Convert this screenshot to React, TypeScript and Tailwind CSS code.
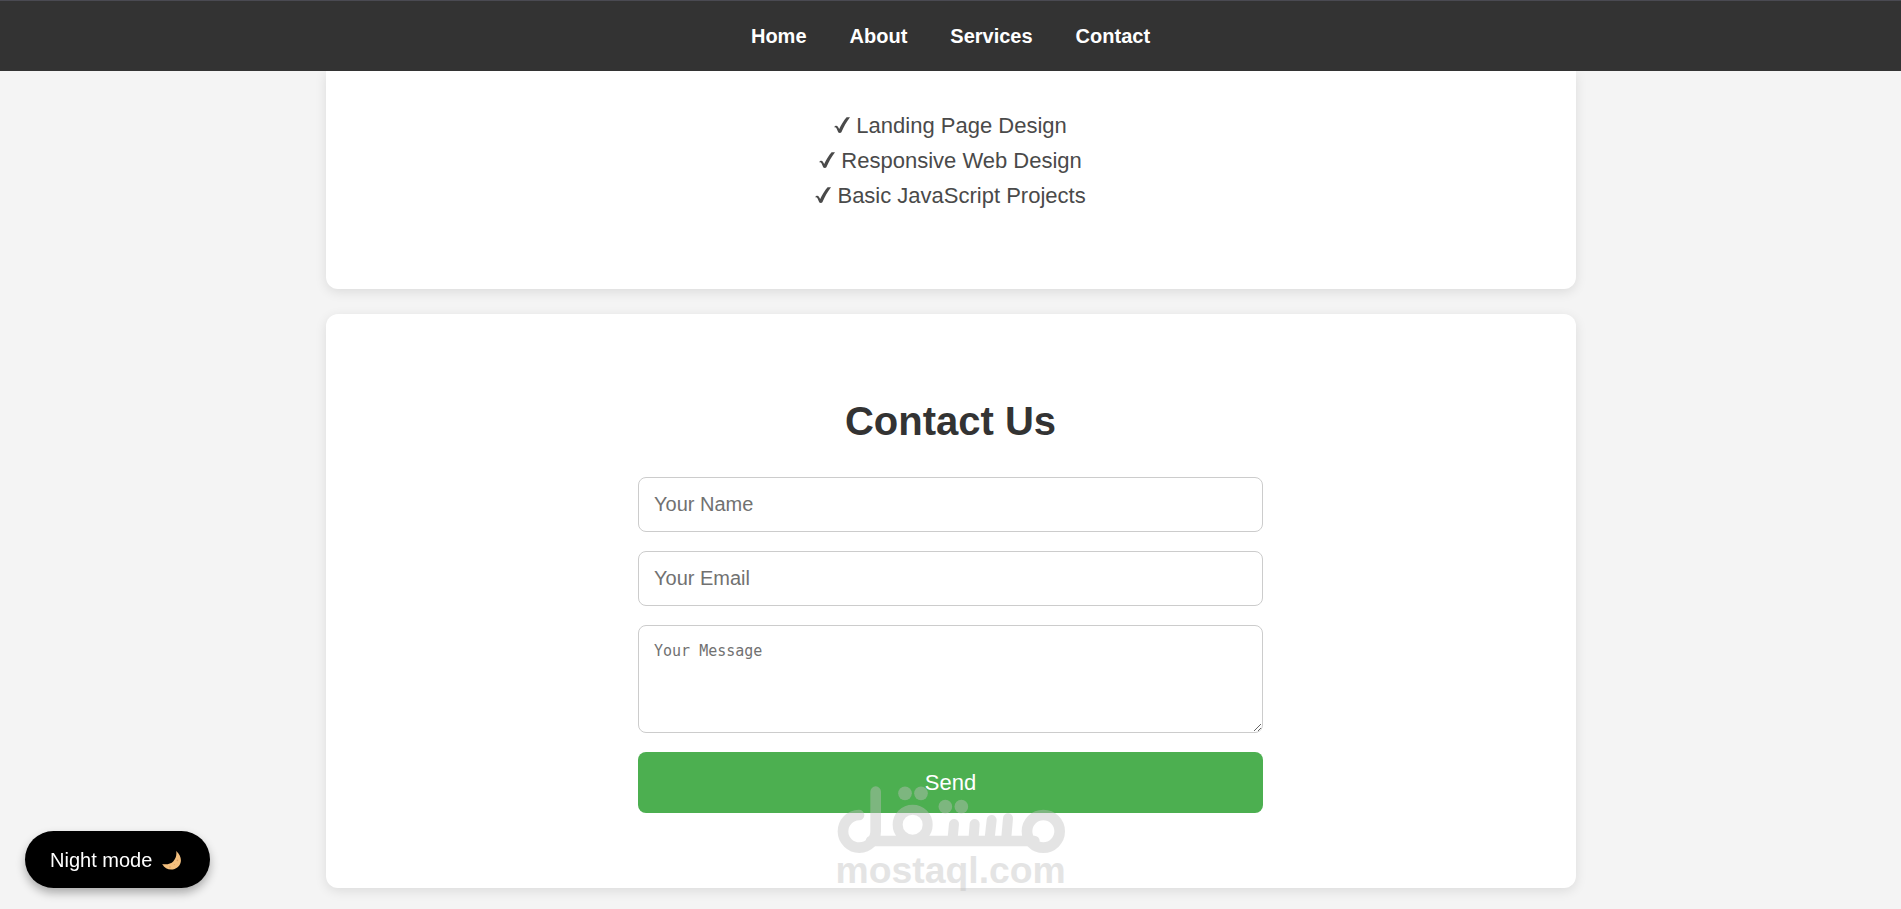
import { useState } from "react";

const navLinks = [
  { href: "#home", label: "Home" },
  { href: "#about", label: "About" },
  { href: "#services", label: "Services" },
  { href: "#contact", label: "Contact" },
];

const services = ["Landing Page Design", "Responsive Web Design", "Basic JavaScript Projects"];

const fieldClass =
  "block w-full rounded-lg border border-[#cccccc] bg-white px-[15px] text-[#333333] placeholder:text-[#717171] placeholder:opacity-100 outline-none";

function CheckMark() {
  return (
    <svg className="inline-block h-4 w-4 fill-current align-baseline" viewBox="0 0 16 16" aria-hidden="true">
      <path d="M0.2 10.2 C1.2 8.4 3 8.4 3.9 9.8 L5.2 12 C7.2 7.6 9.8 3.4 12.6 0.2 L16 0.2 C12.6 4.8 9.8 9.6 7.4 15.2 C6.9 16.2 4.7 16.2 4.2 15.2 L2.6 11.4 C2.1 10.3 1.2 10.1 0.2 10.2 Z" />
    </svg>
  );
}

function Moon() {
  return (
    <svg className="h-5 w-[23px]" viewBox="0 -1 23 20" aria-hidden="true">
      <path
        d="M14.2 0 C21.2 6 20.2 15.4 12.6 18 C7.8 19.6 2.8 17.8 0.2 13 C4.6 13.8 8.8 13 11.4 10.2 C14 7.4 14.8 3.8 14.2 0 Z"
        fill="#f3bf7d"
      />
      <circle cx="15.4" cy="9.4" r="0.8" fill="#d99b62" />
      <circle cx="8" cy="16" r="0.8" fill="#d99b62" />
      <circle cx="12.4" cy="13.6" r="0.7" fill="#e0a76c" />
    </svg>
  );
}

function Watermark() {
  return (
    <svg
      className="pointer-events-none absolute -bottom-[6px] left-1/2 h-[110px] w-[232px] -translate-x-1/2"
      viewBox="42 132 696 330"
      aria-hidden="true"
    >
      <g opacity="0.42">
        <g fill="none" stroke="#c1c1c1" strokeWidth="32" strokeLinecap="round">
          {/* lam */}
          <path d="M114 225 A49 49 0 1 0 164 274 V155" />
          {/* baseline */}
          <path d="M150 303 H640" />
          {/* qaf and meem */}
          <circle cx="275" cy="254" r="45" strokeWidth="30" />
          <circle cx="667" cy="274" r="49" />
          {/* teeth */}
          <path d="M399 252 L394 303 M461 252 L457 303 M512 240 L505 303 M561 235 L555 303" strokeWidth="30" />
        </g>
        <g fill="#c1c1c1">
          <circle cx="252" cy="160" r="20.5" />
          <circle cx="300" cy="160" r="20.5" />
          <circle cx="373" cy="200" r="20.5" />
          <circle cx="421" cy="200" r="20.5" />
          <text x="389" y="430" textAnchor="middle" fontSize="112" fontWeight="700">
            mostaql.com
          </text>
        </g>
      </g>
    </svg>
  );
}

export default function App() {
  const [night, setNight] = useState(false);

  return (
    <div className="min-h-screen bg-[#f4f4f4] pb-[21px] font-['Liberation_Sans',Arial,sans-serif]">
      <nav className="sticky top-0 z-10 flex h-[71px] items-center justify-center gap-[43px] border-t border-[#4a4a52] bg-[#333333]">
        {navLinks.map((link) => (
          <a key={link.href} href={link.href} className="text-xl font-bold text-white">
            {link.label}
          </a>
        ))}
      </nav>

      <main className="mx-auto flex max-w-[1250px] flex-col gap-[25px]">
        <section id="services" className="rounded-b-xl bg-white px-5 pt-[37px] pb-[76px] shadow-[0_3px_12px_rgba(0,0,0,0.1)]">
          <ul className="text-center text-[22px] leading-[35px] text-[#4a4a4a]">
            {services.map((service) => (
              <li key={service}>
                <CheckMark /> {service}
              </li>
            ))}
          </ul>
        </section>

        <section id="contact" className="relative rounded-xl bg-white px-5 py-[75px] shadow-[0_3px_12px_rgba(0,0,0,0.1)]">
          <h2 className="mb-6 text-center text-[40px] leading-[64px] font-bold text-[#333333]">Contact Us</h2>
          <form className="mx-auto flex max-w-[625px] flex-col gap-[19px]" onSubmit={(e) => e.preventDefault()}>
            <input type="text" aria-label="Your Name" placeholder="Your Name" className={`${fieldClass} h-[55px] text-xl`} />
            <input type="email" aria-label="Your Email" placeholder="Your Email" className={`${fieldClass} h-[55px] text-xl`} />
            <textarea
              aria-label="Your Message"
              placeholder="Your Message"
              className={`${fieldClass} h-[108px] resize py-[15px] font-['DejaVu_Sans_Mono',monospace] text-[15px] leading-5`}
            />
            <button type="submit" className="h-[61px] rounded-lg bg-[#4caf50] text-[22px] text-white">
              Send
            </button>
          </form>
          <Watermark />
        </section>
      </main>

      <button
        type="button"
        aria-pressed={night}
        onClick={() => setNight(!night)}
        className="fixed bottom-[21px] left-[25px] flex h-[57px] items-center gap-[10px] rounded-full bg-black px-[25px] text-xl text-white shadow-[0_5px_10px_rgba(0,0,0,0.3)]"
      >
        Night mode <Moon />
      </button>
    </div>
  );
}
